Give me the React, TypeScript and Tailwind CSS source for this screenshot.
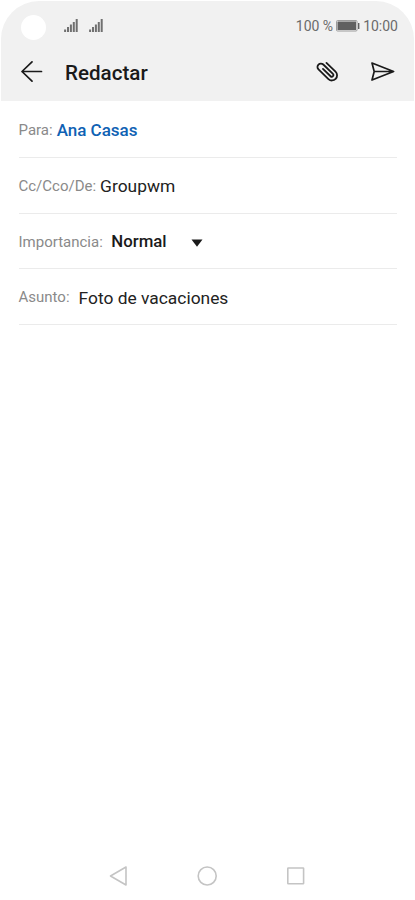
import React from 'react';

const SIGNAL_BARS = [2.5, 5, 7.5, 10, 13];

function SignalIcon() {
  return (
    <svg width="15" height="13" viewBox="0 0 15 13" className="text-[#707070]">
      {SIGNAL_BARS.map((h, idx) => (
        <rect key={idx} x={idx * 2.9 + 0.1} y={13 - h} width="2" height={h} fill="currentColor" />
      ))}
    </svg>
  );
}

function StatusBar() {
  return (
    <div className="flex items-center h-[50px] pl-5 pr-4">
      <div className="size-[25px] rounded-full bg-white mt-0.5" />
      <div className="flex gap-[10px] ml-[18px] mb-px">
        <SignalIcon />
        <SignalIcon />
      </div>
      <div className="flex items-center ml-auto text-sm text-[#6b6b6b]">
        <span>100 %</span>
        <svg width="24" height="12" viewBox="0 0 24 12" className="ml-[3px] mr-[3px]">
          <rect x="0.5" y="0.5" width="20.5" height="10.5" rx="1" fill="none" stroke="#9c9c9c" />
          <rect x="1.5" y="1.5" width="18.5" height="8.5" fill="#606060" />
          <rect x="22" y="3" width="1.4" height="6" fill="#606060" />
        </svg>
        <span>10:00</span>
      </div>
    </div>
  );
}

function Toolbar() {
  return (
    <div className="flex items-center h-[42px] pl-5 pr-[19px] text-[#1a1a1a]">
      <svg width="22" height="22" viewBox="0 0 22 22" fill="none" stroke="currentColor" strokeWidth="1.7" strokeLinecap="round" strokeLinejoin="round">
        <path d="M20.5 10.5H1M11 0.9L1 10.5l10 9.7" />
      </svg>
      <h1 className="ml-[22px] mt-0.5 text-[20.6px] font-medium">Redactar</h1>
      <svg width="24" height="24" viewBox="-12 -12 24 24" className="ml-auto" fill="none" stroke="currentColor" strokeWidth="1.8" strokeLinecap="round">
        <path transform="translate(-0.9 -0.5) rotate(44)" d="M-6.4 -5.7H6.2A5.1 5.1 0 0 1 6.2 4.5H-7.6A3.45 3.45 0 0 1 -7.6 -2.4H5.8A1.7 1.7 0 0 1 5.8 1H-4.8" />
      </svg>
      <svg width="24" height="20" viewBox="0 0 24 20" className="ml-[31px]" fill="none" stroke="currentColor" strokeWidth="1.7" strokeLinejoin="round">
        <path d="M1 1L22.6 9.5L1 18L3.2 9.5ZM3.2 9.5H22.3" />
      </svg>
    </div>
  );
}

interface FieldProps {
  label: string;
  children: React.ReactNode;
}

function Field({ label, children }: FieldProps) {
  return (
    <div className="flex items-center h-[55.7px] mx-[17.5px] pt-0.5 border-b border-[#ebebeb]">
      <span className="text-[15px] text-[#8a8a8a]">{label}</span>
      {children}
    </div>
  );
}

function NavBar() {
  return (
    <div className="flex items-center justify-between h-[46px] mt-auto pl-[108px] pr-[109px]">
      <svg width="18" height="20" viewBox="0 0 18 20" fill="none" stroke="#c4c4c4" strokeWidth="1.6" strokeLinejoin="round">
        <path d="M1.5 10L17 1V19Z" />
      </svg>
      <svg width="20" height="20" viewBox="0 0 20 20" fill="none" stroke="#c4c4c4" strokeWidth="1.6">
        <circle cx="10.2" cy="10" r="9" />
      </svg>
      <svg width="18" height="18" viewBox="0 0 18 18" fill="none" stroke="#c4c4c4" strokeWidth="1.6">
        <rect x="0.8" y="1" width="15.8" height="15.8" rx="0.5" />
      </svg>
    </div>
  );
}

export default function App() {
  return (
    <div className="h-[900px] w-[415px] p-px bg-white font-[Roboto,sans-serif]">
      <div className="flex flex-col h-full rounded-[38px] overflow-hidden">
        <header className="h-[100px] shrink-0 bg-[#f1f1f1]">
          <StatusBar />
          <Toolbar />
        </header>
        <main className="pt-[1.3px]">
          <Field label="Para:">
            <span className="ml-1 text-[17px] font-medium text-[#0f62b4]">Ana Casas</span>
          </Field>
          <Field label="Cc/Cco/De:">
            <span className="ml-1 text-[17.4px] text-[#222222]">Groupwm</span>
          </Field>
          <Field label="Importancia:">
            <span className="ml-[8.5px] text-[16.8px] font-medium text-[#1a1a1a]">Normal</span>
            <svg width="12" height="8" viewBox="0 0 12 8" className="ml-6 mt-px">
              <path d="M0.5 0.5H11.5L6 7.8Z" fill="#1a1a1a" />
            </svg>
          </Field>
          <Field label="Asunto:">
            <span className="ml-[9px] text-[17.4px] text-[#222222]">Foto de vacaciones</span>
          </Field>
        </main>
        <NavBar />
      </div>
    </div>
  );
}
